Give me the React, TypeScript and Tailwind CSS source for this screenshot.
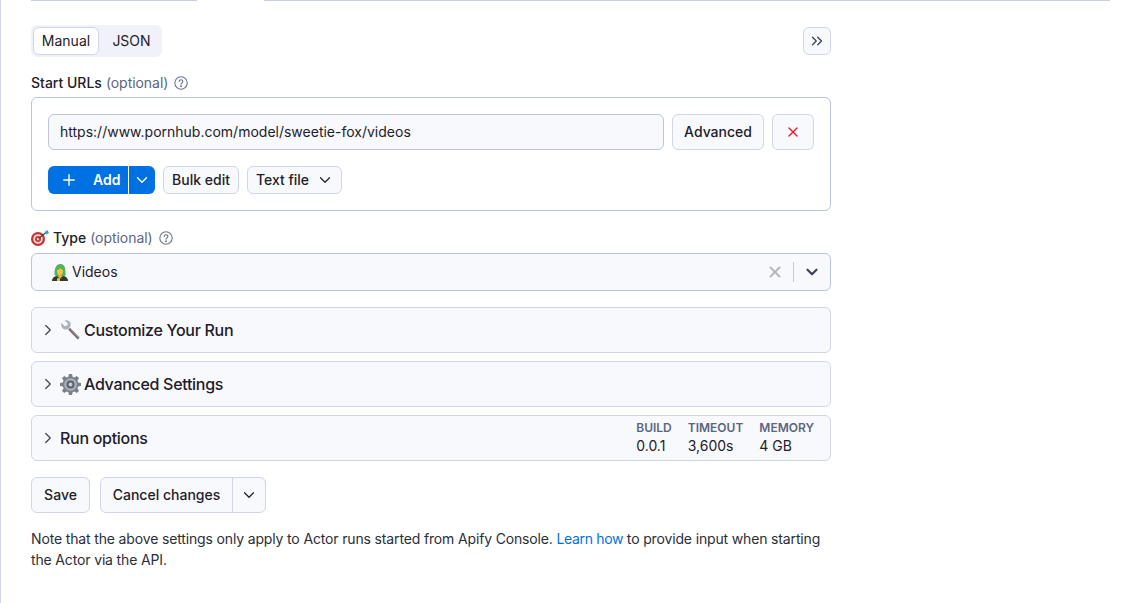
import React from 'react';
import { ChevronDown, ChevronRight, ChevronsRight, Plus, X } from 'lucide-react';

const btn = 'flex items-center justify-center rounded-md border border-[#d0d5e9] bg-[#f8f9fc] text-[#1e2029]';

const HelpIcon = () => (
  <svg width="14" height="14" viewBox="0 0 14 14" fill="none" stroke="#6c7590" strokeWidth="1.1">
    <circle cx="7" cy="7" r="6.2" />
    <path d="M5.2 5.5a1.8 1.8 0 1 1 2.7 1.6c-.6.3-.9.6-.9 1.2" strokeLinecap="round" />
    <circle cx="7" cy="10.2" r=".4" fill="#6c7590" />
  </svg>
);

const Target = () => (
  <svg width="18" height="16" viewBox="0 0 18 16">
    <circle cx="7" cy="9" r="7" fill="#c9302c" />
    <circle cx="7" cy="9" r="4.8" fill="#f3dcd8" />
    <circle cx="7" cy="9" r="3" fill="#d5352f" />
    <circle cx="7" cy="9" r="1.2" fill="#f3dcd8" />
    <path d="M7.5 8.500 15 2.500" stroke="#3a4a55" strokeWidth="1.300" />
    <path d="M13.500 2 16.500 0 18 3l-2.500 1.500z" fill="#35a4c8" />
  </svg>
);

const Elf = () => (
  <svg width="16" height="18" viewBox="0 0 16 18">
    <path d="M0 18c0-3 2-5.500 8-5.500s8 2.500 8 5.500z" fill="#2f3a35" />
    <path d="M2.500 12c0-3 0-5 1-7.500C4.500 2 6.500 1 8.500 1s4 1.500 4.500 4c.5 2.500.5 5 .5 7.500l-3 1H5z" fill="#4fb35c" />
    <path d="M5 7c1.200-.2 2.500-.8 3.500-1.800.7 1 1.600 1.500 2.500 1.800.3 2.700-.8 5.500-3 5.500S4.700 9.700 5 7z" fill="#f6c344" />
    <path d="M5.500 13 8 16l2.500-3-2.500-.8z" fill="#e9b23c" />
    <path d="M5 15.500c1-.8 2-.8 3 0V18H5z" fill="#f1bd3d" />
  </svg>
);

const Wrench = () => (
  <svg width="21" height="21" viewBox="0 0 22 22">
    <path d="M8.500 10 18.500 20.500l2-2L10.500 8z" fill="#6f6a70" />
    <path d="M10 9 19 18.500l1.500-.5L10.500 8z" fill="#a39ca0" />
    <path d="M1.500 3 5 6.500l2.500-.7.7-2.500L4.700.500c2.800-.9 5.300.2 6.200 2.500.5 1.500.3 2.800-.3 4.200L8 9.700C6 10.300 3.500 9.800 2.200 8 1.200 6.500 1 4.700 1.500 3z" fill="#aab3bb" />
  </svg>
);

const Gear = () => (
  <svg width="21" height="21" viewBox="0 0 20 20">
    <path
      d="M8.500 0h3l.5 2.700 1.700.7L16 1.800l2.200 2.200-1.600 2.300.7 1.700L20 8.500v3l-2.700.5-.7 1.700 1.600 2.300-2.200 2.200-2.300-1.600-1.700.7-.5 2.700h-3L8 17.300l-1.700-.7L4 18.200 1.800 16l1.600-2.300-.7-1.700L0 11.500v-3l2.700-.5.7-1.700L1.800 4 4 1.800l2.300 1.600L8 2.700z"
      fill="#79828a"
    />
    <circle cx="10" cy="10" r="6" fill="#a9b2ba" />
    <circle cx="10" cy="10" r="3.800" fill="#59626c" />
    <circle cx="10" cy="10" r="1.900" fill="#c6ccd2" />
  </svg>
);

const Label = ({ icon, name }: { icon?: React.ReactNode; name: string }) => (
  <div className="flex h-[20px] items-center text-sm">
    {icon}
    <span className="font-medium text-[#1e2029]">{name}</span>
    <span className="ml-[4px] tracking-[-0.05px] text-[#5b6580]">(optional)</span>
    <span className="ml-[6px]"><HelpIcon /></span>
  </div>
);

const Section = ({ icon, title, children }: { icon?: React.ReactNode; title: string; children?: React.ReactNode }) => (
  <div className="flex h-[46px] items-center rounded-md border border-[#d0d5e9] bg-[#f8f9fc] pl-[7px] pr-4">
    <ChevronRight className="h-[18px] w-[18px] text-[#3d4459]" strokeWidth={1.6} />
    <div className="ml-[3px] flex items-center gap-[3px]">
      {icon}
      <span className="text-base font-medium tracking-[-0.3px] text-[#1e2029]">{title}</span>
    </div>
    {children}
  </div>
);

const Stat = ({ name, value }: { name: string; value: string }) => (
  <div className="mb-[2px] text-[#1e2029]">
    <div className="text-xs leading-[17px] font-semibold text-[#5b6580]">{name}</div>
    <div className="text-sm leading-[20px]">{value}</div>
  </div>
);

export default function App() {
  return (
    <div className="h-[603px] w-[1137px] overflow-hidden border-l border-[#d0d5e9] bg-white font-['Inter',sans-serif] text-sm text-[#1e2029]">
      {/* tab underline */}
      <div className="ml-[30px] flex w-[1079px]">
        <div className="h-px w-[166px] bg-[#c9cfe6]" />
        <div className="w-[67px]" />
        <div className="h-px flex-1 bg-[#c9cfe6]" />
      </div>

      <div className="ml-[30px] w-[800px] pt-6">
        <div className="flex items-center justify-between">
          <div className="flex h-8 w-[131px] items-center rounded-md bg-[#f0f1f9] pl-[2px]">
            <div className="flex h-7 w-[66px] items-center justify-center rounded-md border border-[#d0d5e9] bg-white">Manual</div>
            <div className="flex h-7 w-[63px] items-center justify-center pl-[2px]">JSON</div>
          </div>
          <button className={`${btn} h-7 w-7`}>
            <ChevronsRight className="h-[18px] w-[18px] text-[#3d4459]" strokeWidth={1.8} />
          </button>
        </div>

        <div className="mt-4">
          <Label name="Start URLs" />
        </div>
        <div className="mt-[4px] h-[114px] rounded-md border border-[#bcc3dd] px-4 pt-4">
          <div className="flex gap-2">
            <div className="flex h-9 w-[616px] items-center rounded-md border border-[#bcc3dd] bg-[#f8f9fc] pl-[11px]">
              https://www.pornhub.com/model/sweetie-fox/videos
            </div>
            <button className={`${btn} h-9 w-[92px] font-medium`}>Advanced</button>
            <button className={`${btn} h-9 w-[42px]`}>
              <X className="h-4 w-4 text-[#ee1c2e]" strokeWidth={2} />
            </button>
          </div>
          <div className="mt-4 flex h-7 gap-2">
            <div className="flex">
              <button className="flex h-7 w-[80px] items-center rounded-l-md bg-[#0071e3] pl-[12px] font-semibold text-white">
                <Plus className="h-[18px] w-[18px]" strokeWidth={1.8} />
                <span className="ml-[15px]">Add</span>
              </button>
              <button className="ml-px flex h-7 w-[26px] items-center justify-center rounded-r-md bg-[#0071e3] text-white">
                <ChevronDown className="h-[18px] w-[18px]" strokeWidth={1.8} />
              </button>
            </div>
            <button className={`${btn} h-7 w-[76px] font-medium`}>Bulk edit</button>
            <button className={`${btn} h-7 w-[95px] gap-[7px] pl-px font-medium`}>
              Text file
              <ChevronDown className="h-[18px] w-[18px]" strokeWidth={1.6} />
            </button>
          </div>
        </div>

        <div className="mt-[17px]">
          <Label icon={<span className="mr-[4px]"><Target /></span>} name="Type" />
        </div>
        <div className="mt-[5px] flex h-[38px] items-center rounded-md border border-[#bcc3dd] bg-[#f8f9fc] pl-[20px] pr-[9px]">
          <Elf />
          <span className="ml-[4px]">Videos</span>
          <div className="ml-auto flex items-center">
            <X className="h-[18px] w-[18px] text-[#b5b8bf]" strokeWidth={2.6} />
            <div className="mx-[9px] h-5 w-px bg-[#c6cad6]" />
            <ChevronDown className="h-[18px] w-[18px] text-[#3d4459]" strokeWidth={3} />
          </div>
        </div>

        <div className="mt-4 flex flex-col gap-2">
          <Section icon={<Wrench />} title="Customize Your Run" />
          <Section icon={<Gear />} title="Advanced Settings" />
          <Section title="Run options">
            <div className="ml-auto flex gap-4">
              <Stat name="BUILD" value="0.0.1" />
              <Stat name="TIMEOUT" value="3,600s" />
              <Stat name="MEMORY" value="4 GB" />
            </div>
          </Section>
        </div>

        <div className="mt-4 flex gap-[10px]">
          <button className={`${btn} h-9 w-[59px] font-medium`}>Save</button>
          <div className="flex h-9 w-[166px] rounded-md border border-[#d0d5e9] bg-[#f8f9fc]">
            <button className="flex w-[132px] items-center justify-center border-r border-[#d0d5e9] font-medium">Cancel changes</button>
            <button className="flex flex-1 items-center justify-center">
              <ChevronDown className="h-[18px] w-[18px]" strokeWidth={1.6} />
            </button>
          </div>
        </div>

        <p className="mt-[15px] leading-[21px] tracking-[-0.15px] text-[#2b2e38]">
          Note that the above settings only apply to Actor runs started from Apify Console.{' '}
          <span className="tracking-[-0.35px] text-[#0071e3]">Learn how</span> to provide input when starting the Actor via the API.
        </p>
      </div>
    </div>
  );
}
